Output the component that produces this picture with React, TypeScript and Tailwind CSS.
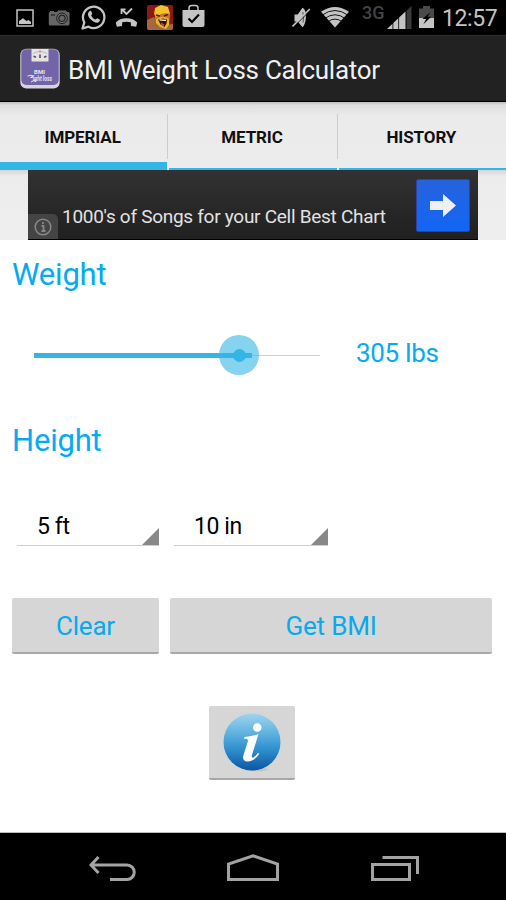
import React, { useState } from 'react';

type Tab = 'IMPERIAL' | 'METRIC' | 'HISTORY';

const tabs: Tab[] = ['IMPERIAL', 'METRIC', 'HISTORY'];

const MIN_WEIGHT = 0;
const MAX_WEIGHT = 400;

const StatusBar: React.FC = () => (
  <div className="flex h-[35px] shrink-0 items-start justify-between bg-black pr-[9px] pl-[16px] text-[#c4c4c4]">
    <div className="flex">
      {/* Screenshot */}
      <svg className="mt-[9px] h-[18px] w-[18px]" viewBox="0 0 18 18">
        <path d="M1 1h16v16H1z" fill="none" stroke="currentColor" strokeWidth="1.500" />
        <path d="M3 15v-3l4-2.800 3.500 2.800 2-1 2.500 2V15z" fill="currentColor" />
      </svg>
      {/* Camera */}
      <svg className="mt-[9px] ml-[14px] h-[18px] w-[22px]" viewBox="0 0 22 18">
        <path d="M2 2h4v1h3l1-1.500h8l1 1.500h1.500q1 0 1 1v11q0 1.500-1.500 1.500H2Q.8 16.500.8 15V4Q.8 3 2 3z" fill="#666" />
        <circle cx="14" cy="9.300" r="5.300" fill="#777" stroke="#1c1c1c" strokeWidth="1" />
        <circle cx="14" cy="9.300" r="3.200" fill="#666" stroke="#222" strokeWidth="1.200" />
        <path d="M3 6h4" stroke="#222" strokeWidth="1.300" />
      </svg>
      {/* WhatsApp */}
      <svg className="mt-[4px] ml-[11px] h-[26px] w-[25px]" viewBox="0 0 25 26">
        <path d="M1.500 24.500l1.800-6a10.700 10.700 0 1 1 4.200 4.200z" fill="none" stroke="currentColor" strokeWidth="2.300" strokeLinejoin="round" />
        <path d="M8.500 7.300c.7-.7 1.500-.5 1.800.2l.9 2.100c.2.600-.9 1.400-1 1.900.7 1.700 2.500 3.500 4.300 4.100.6-.1 1.300-1.500 1.900-1.300l2.200 1.100c1 .6-.3 3.200-2.700 3.300C12 18.700 6.500 13.200 7 10c.1-1.200.7-2 1.500-2.700z" fill="currentColor" />
      </svg>
      {/* Missed call */}
      <svg className="mt-[7px] ml-[9px] h-[21px] w-[23px]" viewBox="0 0 23 21">
        <path d="M7 2.500l4.500 4.500L17 1.500M6.500 7V2.300h4" fill="none" stroke="currentColor" strokeWidth="1.800" />
        <path d="M.8 15.500C5 9.700 18 9.700 22.200 15.500l-1 4.300-5.200-.9-.3-3.600c-2.500-.8-5.900-.8-8.400 0L7 18.900l-5.200.9z" fill="currentColor" />
      </svg>
      {/* Barbarian */}
      <svg className="mt-[5px] ml-[9px] h-[25px] w-[26px]" viewBox="0 0 26 25">
        <rect width="26" height="25" rx="2" fill="#8c1713" />
        <path d="M0 15l7-3 5 9 7-1 7-1v4q0 2-2 2H2q-2 0-2-2z" fill="#a3683c" />
        <path d="M8 4l7-3 6 3 2 6-1 10-4 3-7-3-3-6z" fill="#c9762f" />
        <path d="M7 9l1-6 6-3 7 2 2 7-5-1-4 1-5 3z" fill="#efc42c" />
        <path d="M9 10l4 1M17 11l4-1.500" stroke="#4c1d13" strokeWidth="1.800" />
        <path d="M9 14l5-2h4l4 2v6l-3 4-6-2-4-4z" fill="#e8b62b" />
        <path d="M11 14.500l5-1 4 1-.5 4-2 3.500-4-2.500z" fill="#3a0f10" />
        <path d="M12.500 14.800l6.500.5" stroke="#fff" strokeWidth="1.200" />
        <path d="M14 18.500l3 2" stroke="#d8463c" strokeWidth="1.800" />
      </svg>
      {/* Play store */}
      <svg className="mt-[4px] ml-[9px] h-[23px] w-[23px]" viewBox="0 0 23 23">
        <path d="M7 7V4q0-2.500 2.500-2.500h4Q16 1.500 16 4v3" fill="none" stroke="currentColor" strokeWidth="1.500" />
        <path d="M.5 6h22v15q0 2-2 2h-18q-2 0-2-2z" fill="currentColor" />
        <path d="M6.500 14.500l3.500 3.500 7-7.500" fill="none" stroke="#000" strokeWidth="2.200" />
      </svg>
    </div>

    <div className="flex">
      {/* Sound off */}
      <svg className="mt-[7px] h-[21px] w-[19px]" viewBox="0 0 19 21">
        <path d="M2.500 7.500h3.200L10.500.8q3.800 2 3.400 9.500T10.500 20.200L5.700 14.500H2.500z" fill="currentColor" />
        <path d="M10.800 5q1.600 5 .2 10.500" fill="none" stroke="#555" strokeWidth="1" />
        <path d="M1.500 20L18.500 3" stroke="#000" strokeWidth="1" />
        <path d="M.5 19.500L17.800 2" stroke="currentColor" strokeWidth="1.600" />
      </svg>
      {/* Wifi */}
      <svg className="mt-[7px] ml-[10px] h-[21px] w-[28px]" viewBox="0 0 28 21">
        <path d="M0 4.800Q14-4.800 28 4.800L14 20.500z" fill="currentColor" />
        <path d="M1 8.200Q14-1.200 27 8.200M3.500 11.700Q14 3.800 24.500 11.700M6.500 14.900Q14 9.300 21.500 14.900" fill="none" stroke="#000" strokeWidth=".9" />
      </svg>
      <span className="mt-[3px] ml-[13px] w-[23px] text-[18px] leading-[20px] font-medium text-[#444]">3G</span>
      {/* Signal */}
      <svg className="mt-[6px] ml-[2px] h-[23px] w-[25px]" viewBox="0 0 25 23">
        <path d="M19.500 4.800L24.500 0v23h-5z" fill="#3b3b3b" />
        <path d="M0 23l5.500-5.200V23zM6.300 17l5-4.700V23h-5zM12.100 11.600l6.400-6.100V23h-6.400z" fill="currentColor" />
      </svg>
      {/* Battery */}
      <svg className="mt-[6px] ml-[7px] h-[22px] w-[15px]" viewBox="0 0 15 22">
        <path d="M4 0h7v2.500h4V12H0V2.500h4z" fill="#4a4a4a" />
        <path d="M0 12h15v10H0z" fill="currentColor" />
        <path d="M11.500 6L3.500 13h3.700l-3 5.500 8-7.700H8.500z" fill="#000" />
      </svg>
      <span className="mt-[4px] ml-[8px] w-[55px] text-[23px] leading-[30px] tracking-[-0.4px] whitespace-nowrap">12:57</span>
    </div>
  </div>
);

const AppIcon: React.FC = () => (
  <svg className="h-[42px] w-[40px]" viewBox="0 0 40 42">
    <rect x=".3" y=".8" width="39.400" height="39.700" rx="6" fill="#d6d4da" />
    <rect x="1.300" y="1.300" width="37.400" height="35.700" rx="5" fill="#7264a6" />
    <path d="M11.500 1h17v12.500h-17z" fill="#e6e2e6" />
    <path d="M13 5.500q7-4 14 0" fill="none" stroke="#a8c3c6" strokeWidth="1" />
    <path d="M20 2v3" stroke="#d46a6a" strokeWidth=".7" />
    <path d="M13.500 8.300l2.500 1M20 6.500V10M24 9.300l2.500-1" stroke="#555" strokeWidth="1.600" />
    <text x="19.500" y="26" textAnchor="middle" fontSize="6" fontWeight="700" fill="#e8e6ef">BMI</text>
    <text x="22.500" y="32.500" textAnchor="middle" fontSize="7" fontWeight="700" fontStyle="italic" fill="#e8e6ef" textLength="19" lengthAdjust="spacingAndGlyphs">ight loss</text>
    <path d="M7.500 28q4-1.500 6 0l-3 1.500 3-.3M11 34l5-2.500" fill="none" stroke="#e8e6ef" strokeWidth="1" />
  </svg>
);

const NavBar: React.FC = () => (
  <div className="flex h-[67px] shrink-0 items-start justify-between bg-black pr-[87px] pl-[89px] text-[#a3a3a3]">
    <svg className="mt-[22px] h-[27px] w-[47px]" viewBox="0 0 47 27" fill="none" stroke="currentColor" strokeWidth="3">
      <path d="M21 24.500h17a6.800 6.800 0 0 0 0-14.500H3M9.500 2L2 10l7.500 8" />
    </svg>
    <svg className="mt-[20px] mr-[1px] h-[29px] w-[52px]" viewBox="0 0 52 29" fill="none" stroke="currentColor" strokeWidth="3">
      <path d="M1.500 26.500V11L26 2.800 50.500 11v15.500z" />
    </svg>
    <svg className="mt-[22px] h-[27px] w-[49px]" viewBox="0 0 49 27" fill="none" stroke="currentColor" strokeWidth="3">
      <path d="M2.500 9.500h37v15h-37zM12.500 2.500h35V19" />
    </svg>
  </div>
);

const Spinner: React.FC<{ value: string; className: string }> = ({ value, className }) => (
  <div className={`flex h-[40px] justify-between border-b border-[#cfcfcf] pl-[20px] ${className}`}>
    <span className="text-[23px] leading-[41px] tracking-[-0.4px] whitespace-nowrap text-black">{value}</span>
    <svg className="h-[17px] w-[17px] self-end" viewBox="0 0 17 17">
      <path d="M17 0v17H0z" fill="#888" />
    </svg>
  </div>
);

const buttonClass =
  'h-[56px] rounded-[2px] border-b-2 border-[#a8a8a8] bg-[#d6d6d6] pt-[2px] text-[26px] tracking-[-0.2px] text-[#05aaef]';

const App: React.FC = () => {
  const [activeTab, setActiveTab] = useState<Tab>('IMPERIAL');
  const [weight, setWeight] = useState(305);

  const progress = ((weight - MIN_WEIGHT) / (MAX_WEIGHT - MIN_WEIGHT)) * 100;

  return (
    <div className="flex h-[900px] w-[506px] flex-col overflow-hidden bg-white font-['Roboto',sans-serif]">
      <StatusBar />

      {/* Action bar */}
      <header className="flex h-[67px] shrink-0 items-center border-t border-b border-t-[#303030] border-b-black bg-[#222] pl-[20px]">
        <AppIcon />
        <h1 className="mt-[2px] ml-[8px] text-[26px] leading-[34px] tracking-[-0.27px] whitespace-nowrap text-[#f0f0f0]">
          BMI Weight Loss Calculator
        </h1>
      </header>

      <nav className="flex h-[68px] shrink-0 bg-[linear-gradient(#bdbdbd,#dedede_3px,#ebebeb_14px,#ececec)]">
        {tabs.map((tab, i) => (
          <React.Fragment key={tab}>
            {i > 0 && (
              <span className="flex w-[2px] flex-col pt-[12px]">
                <span className="h-[45px] w-px bg-[#cdcdcd]" />
              </span>
            )}
            <button
              onClick={() => setActiveTab(tab)}
              className={`flex-1 border-[#33b5e5] pr-[2px] text-[17px] font-bold tracking-[-0.1px] text-[#111] ${
                tab === activeTab ? 'border-b-8 pt-[12px]' : 'border-b-2 pt-[6px]'
              }`}
            >
              {tab}
            </button>
          </React.Fragment>
        ))}
      </nav>

      {/* Ad banner */}
      <div className="flex h-[70px] shrink-0 justify-center bg-[linear-gradient(#d5d5d5,#ececec_6px,#eee)]">
        <div className="flex w-[450px] border-b border-black bg-linear-to-b from-[#323232] to-[#202020]">
          <div className="flex h-[25px] w-[30px] items-center justify-center self-end rounded-tr-[5px] bg-[#444]">
            <svg className="h-[18px] w-[18px]" viewBox="0 0 18 18" fill="none" stroke="#888" strokeWidth="1.500">
              <circle cx="9" cy="9" r="7.800" />
              <path d="M7.500 8h2v5M7.500 13h4M9 4v2" strokeWidth="1.800" />
            </svg>
          </div>
          <p className="mt-[34px] ml-[4px] flex-1 text-[19px] leading-[26px] tracking-[-0.28px] whitespace-nowrap text-[#e2e2e2]">
            1000's of Songs for your Cell Best Chart
          </p>
          <div className="mt-[9px] mr-[8px] flex h-[53px] w-[54px] items-center justify-center rounded-[2px] border border-[#3040a0] bg-linear-to-b from-[#2563de] to-[#1165f5]">
            <svg className="h-[23px] w-[26px]" viewBox="0 0 26 23">
              <path d="M0 7h13V0l13 11.500L13 23v-7H0z" fill="#f0f0f0" />
            </svg>
          </div>
        </div>
      </div>

      <main className="flex flex-1 flex-col border-b border-[#bbb] bg-white text-[#05aaef]">
        <h2 className="mt-[15px] ml-[12px] text-[31px] leading-[40px] tracking-[-0.2px]">Weight</h2>

        <div className="mt-[39px] flex h-[42px] items-center pl-[34px]">
          <div className="relative h-[42px] w-[286px]">
            <div className="flex h-full items-center">
              <div className="h-[5px] bg-[#33b5e5]" style={{ width: `${progress}%` }} />
              <div className="h-px flex-1 bg-[#d0d0d0]" />
            </div>
            <div className="pointer-events-none absolute top-[1px] left-[185px] flex h-[40px] w-[40px] items-center justify-center rounded-full bg-[#33b5e5]/60">
              <span className="h-[13px] w-[13px] rounded-full bg-[#33b5e5]" />
            </div>
            <input
              type="range"
              aria-label="Weight"
              min={MIN_WEIGHT}
              max={MAX_WEIGHT}
              value={weight}
              onChange={e => setWeight(Number(e.target.value))}
              className="absolute inset-0 w-full opacity-0"
            />
          </div>
          <span className="mb-[4px] ml-[36px] text-[26px] leading-[34px] tracking-[-0.4px] whitespace-nowrap">{weight} Ibs</span>
        </div>

        <h2 className="mt-[45px] ml-[12px] text-[31px] leading-[40px] tracking-[-0.2px]">Height</h2>

        <div className="mt-[45px] flex pl-[17px]">
          <Spinner value="5 ft" className="w-[142px]" />
          <Spinner value="10 in" className="ml-[15px] w-[154px]" />
        </div>

        <div className="mt-[52px] flex pl-[12px]">
          <button className={`w-[147px] ${buttonClass}`} onClick={() => setWeight(MIN_WEIGHT)}>Clear</button>
          <button className={`ml-[11px] w-[322px] ${buttonClass}`}>Get BMI</button>
        </div>

        <button
          aria-label="About BMI"
          className="mt-[52px] ml-[209px] flex h-[74px] w-[86px] items-center justify-center rounded-[2px] border-b-2 border-[#a8a8a8] bg-[#d6d6d6]"
        >
          <svg className="h-[60px] w-[60px]" viewBox="0 0 60 60">
            <defs>
              <linearGradient id="info" x1="0" y1="0" x2="0" y2="1">
                <stop offset="0" stopColor="#9fd4ee" />
                <stop offset=".35" stopColor="#5db2e0" />
                <stop offset=".65" stopColor="#2d8ccb" />
                <stop offset="1" stopColor="#0b56a4" />
              </linearGradient>
            </defs>
            <ellipse cx="34" cy="57.500" rx="12" ry="1.800" fill="#c4c4c4" />
            <circle cx="30" cy="30" r="28.500" fill="url(#info)" />
            <circle cx="35.300" cy="15.500" r="4.300" fill="#fff" />
            <path d="M22.500 25q7-.5 14-3l-6.500 21q-.8 3 1.300 2.500 2-.8 4.500-4.500l1.500.8C33.500 47.500 29 50 24.500 49.500q-4.700-1-3-6.500l4.300-13.500q.7-2.700-1.600-2.800H22z" fill="#fff" />
          </svg>
        </button>
      </main>

      <NavBar />
    </div>
  );
};

export default App;
